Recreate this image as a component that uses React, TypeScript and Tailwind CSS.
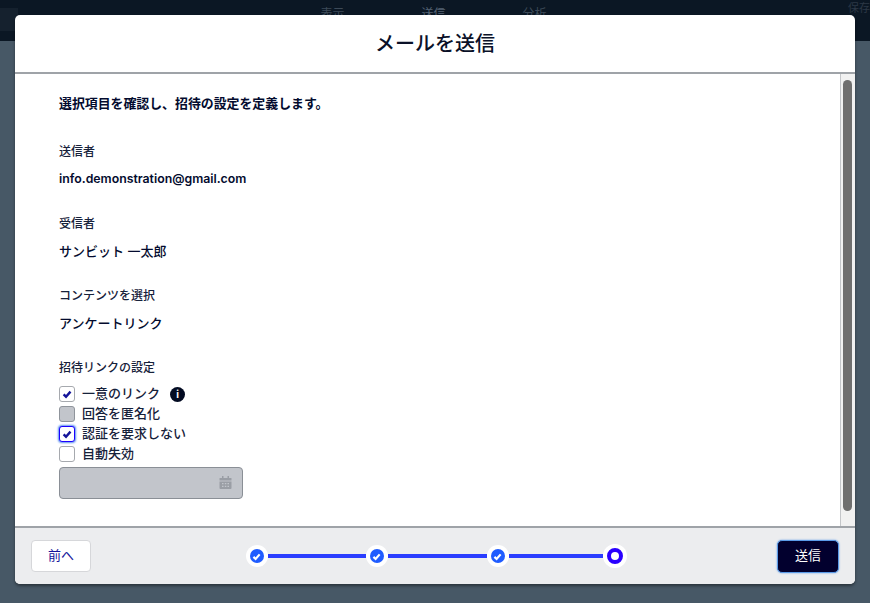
import React from 'react';

const font = 'font-["Inter","Noto_Sans_CJK_JP",sans-serif]';

const Tick = ({ size, color }: { size: number; color: string }) => (
  <svg width={size} height={size} viewBox="0 0 10 10" fill="none">
    <path d="M1.6 5.4 4 7.7 8.5 2.6" stroke={color} strokeWidth="2.4" />
  </svg>
);

// Checkbox row for the invite link settings
const CheckRow = ({ label, state, info }: { label: string; state: 'on' | 'off' | 'disabled' | 'focus'; info?: boolean }) => (
  <div className="flex items-center h-5">
    <span
      className={`w-4 h-4 rounded-[3px] flex items-center justify-center border ${
        state === 'disabled'
          ? 'bg-[#c2c5cb] border-[#8f949b]'
          : state === 'focus'
          ? 'bg-white border-[#1b00ff] shadow-[0_0_2px_1px_#5b8ff0]'
          : 'bg-white border-[#a6a9ae]'
      }`}
    >
      {(state === 'on' || state === 'focus') && <Tick size={10} color="#14149a" />}
    </span>
    <span className="ml-[7px] text-[13px] font-medium text-[#16213a]">{label}</span>
    {info && (
      <span className="ml-[10px] w-[15px] h-[15px] rounded-full bg-[#030b22] text-white flex items-center justify-center text-[10px] font-bold">
        i
      </span>
    )}
  </div>
);

const Field = ({ label, value, latin }: { label: string; value: string; latin?: boolean }) => (
  <div className="h-[72px]">
    <div className="text-[12px] font-medium leading-5 text-[#16213a]">{label}</div>
    <div className={`mt-[7px] leading-5 text-[#030b2e] ${latin ? 'text-[12.3px] font-semibold' : 'text-[13px] font-medium'}`}>{value}</div>
  </div>
);

const StepDone = () => (
  <span className="w-[22px] h-[22px] rounded-full bg-white flex items-center justify-center shrink-0">
    <span className="w-[14px] h-[14px] rounded-full bg-[#1f5cff] flex items-center justify-center">
      <Tick size={9} color="#ffffff" />
    </span>
  </span>
);

const Line = ({ w }: { w: string }) => <span className={`h-1 bg-[#2a3dff] ${w}`} />;

export default function App() {
  return (
    <div className={`relative h-[603px] w-[870px] overflow-hidden bg-[#475866] ${font}`}>
      {/* page behind the modal */}
      <div className="relative h-[41px] bg-[#0b1724] flex justify-center gap-[77px] pt-[5px] pr-[3px] text-[12px] text-[#3d4a58]">
        <span className="absolute left-0 top-[8px] w-[18px] h-[23px] bg-[#15212e]" />
        <span>表示</span>
        <span className="text-[#566474]">送信</span>
        <span>分析</span>
        <span className="absolute right-0 top-0 text-[11px] whitespace-nowrap text-[#2c3846]">保存</span>
      </div>

      <div className="absolute left-[15px] top-[15px] w-[840px] h-[569px] bg-white rounded-[5px] overflow-hidden flex flex-col shadow-[0_2px_3px_rgba(0,0,0,0.4)]">
        <div className="h-[59px] shrink-0 border-b-2 border-[#9fa3a8] flex items-center justify-center text-[20px] font-medium text-[#0a1128]">
          メールを送信
        </div>

        <div className="flex-1 min-h-0 flex">
          <div className="flex-1 pl-[44px] pt-[20px]">
            <p className="text-[12.9px] font-semibold leading-5 text-[#030b2e]">選択項目を確認し、招待の設定を定義します。</p>
            <div className="mt-[28px]">
              <Field label="送信者" value="info.demonstration@gmail.com" latin />
              <Field label="受信者" value="サンビット 一太郎" />
              <Field label="コンテンツを選択" value="アンケートリンク" />
            </div>
            <div className="text-[12px] font-medium leading-5 text-[#16213a]">招待リンクの設定</div>
            <div className="mt-[6px]">
              <CheckRow label="一意のリンク" state="on" info />
              <CheckRow label="回答を匿名化" state="disabled" />
              <CheckRow label="認証を要求しない" state="focus" />
              <CheckRow label="自動失効" state="off" />
            </div>
            <div className="mt-[3px] w-[184px] h-8 rounded-[4px] bg-[#c2c5cb] border border-[#8a8f96] flex items-center justify-end pr-[10px]">
              <svg width="13" height="14" viewBox="0 0 13 14" fill="#9a9ea5">
                <rect x="3" y="0" width="1.5" height="3" />
                <rect x="8.5" y="0" width="1.5" height="3" />
                <rect x="0.5" y="2" width="12" height="2.5" rx="0.5" />
                <path d="M.5 5.5h12V12a1 1 0 0 1-1 1h-10a1 1 0 0 1-1-1z" />
                <path d="M3 7h1.5v1.3H3zM5.8 7h1.5v1.3H5.8zM8.5 7H10v1.3H8.5zM3 9.7h1.5V11H3zM5.8 9.7h1.5V11H5.8zM8.5 9.7H10V11H8.5z" fill="#c2c5cb" />
              </svg>
            </div>
          </div>
          <div className="w-[15px] shrink-0 border-l border-[#c4c6c9] bg-[#f1f1f1] pt-[6px] pl-[2px]">
            <div className="w-[9px] h-[431px] rounded-full bg-[#6f6f6f]" />
          </div>
        </div>

        <div className="h-[58px] shrink-0 border-t-2 border-[#9fa3a8] bg-[#ecedef] flex items-center justify-between pl-4 pr-4">
          <button className="w-[60px] h-8 rounded-[4px] bg-white border border-[#d6d7da] text-[13px] text-[#14149a]">前へ</button>
          <div className="flex items-center ml-1">
            <StepDone />
            <Line w="w-[98px]" />
            <StepDone />
            <Line w="w-[99px]" />
            <StepDone />
            <Line w="w-[94px]" />
            <span className="w-6 h-6 rounded-full bg-white flex items-center justify-center shrink-0">
              <span className="w-4 h-4 rounded-full border-[4px] border-[#2a00ff] bg-white" />
            </span>
          </div>
          <button className="w-[62px] h-[33px] rounded-[5px] bg-[#02002e] border border-[#5b9be8] shadow-[0_0_2px_#5b9be8] text-[13px] text-white">送信</button>
        </div>
      </div>
    </div>
  );
}
